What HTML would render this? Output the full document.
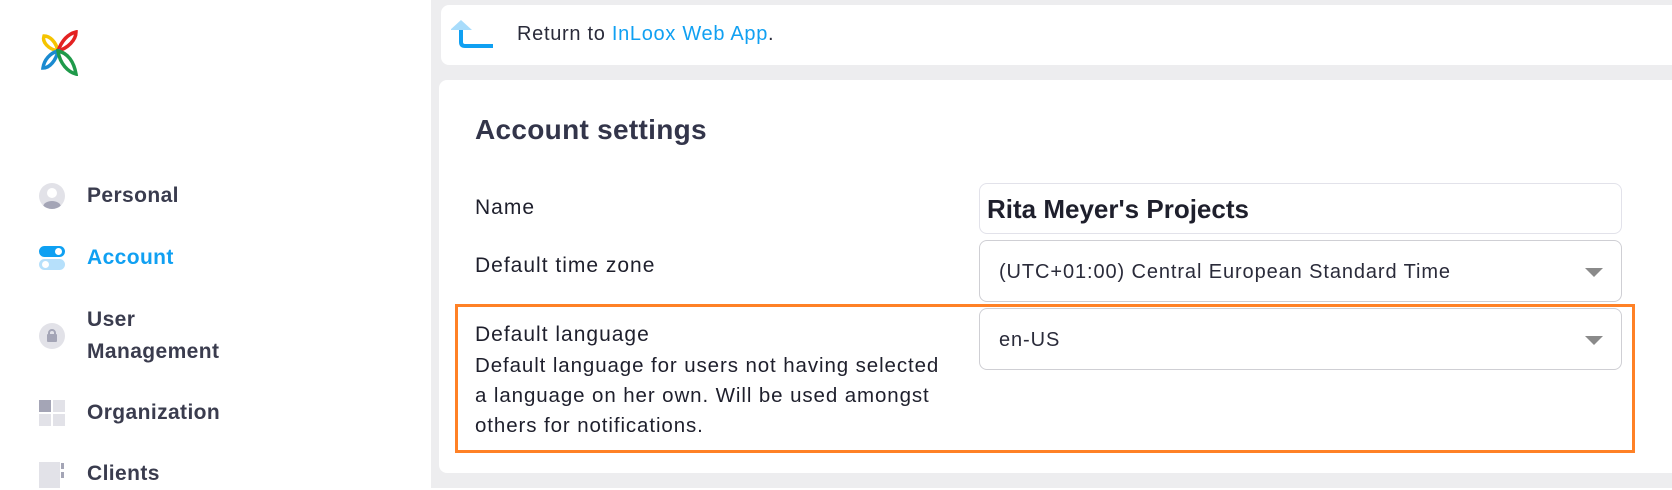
<!DOCTYPE html>
<html><head><meta charset="utf-8"><style>
*{margin:0;padding:0;box-sizing:border-box}
body{width:1672px;height:488px;overflow:hidden;background:#fff;font-family:"Liberation Sans",sans-serif;color:#2a2b3a;position:relative}
.side{position:absolute;left:0;top:0;width:431px;height:488px;background:#fff}
.main{position:absolute;left:431px;top:0;right:0;height:488px;background:#ededef}
.abs{position:absolute}
.nav{position:absolute;left:87px;font-size:21px;font-weight:bold;color:#3a3c4e;line-height:32px;letter-spacing:0.4px}
.card1{position:absolute;left:441px;top:5px;width:1300px;height:60px;background:#fff;border-radius:8px}
.card2{position:absolute;left:439px;top:80px;width:1300px;height:393px;background:#fff;border-radius:8px}
.lbl{position:absolute;left:475px;font-size:21px;color:#1e1f2c;line-height:30px;letter-spacing:1px}
.inp{position:absolute;left:979px;width:643px;border:1px solid #cfcfd4;border-radius:8px;background:#fff}
.arr{position:absolute;right:18px;width:0;height:0;border-left:9px solid transparent;border-right:9px solid transparent;border-top:9px solid #8a8a8a}
</style></head><body>
<div class="side">
<svg class="abs" style="left:40px;top:30px" width="38" height="46" viewBox="0 0 38 46">
<path d="M18 21 C8 19 2 12 4 6 C10 6 16 12 18 21Z" fill="none" stroke="#f5c400" stroke-width="3.5"/>
<path d="M18 21 C22 10 28 4 36 2 C36 10 28 18 18 21Z" fill="none" stroke="#e32222" stroke-width="3.5"/>
<path d="M18 21 C10 23 4 30 3 38 C10 38 16 30 18 21Z" fill="none" stroke="#1a8ad0" stroke-width="3.5"/>
<path d="M18 21 C28 23 34 32 36 44 C28 42 20 34 18 21Z" fill="none" stroke="#1f9a4a" stroke-width="3.5"/>
</svg>
<div class="abs" style="left:39px;top:183px;width:26px;height:26px;border-radius:50%;background:#e2e2e8;overflow:hidden"><div class="abs" style="left:8px;top:5px;width:10px;height:10px;border-radius:50%;background:#fff"></div><div class="abs" style="left:4px;top:18px;width:18px;height:12px;border-radius:50%;background:#a4a5b6"></div></div>
<div class="nav" style="top:180px">Personal</div>
<div class="abs" style="left:39px;top:246px;width:26px;height:11px;border-radius:6px;background:#0ea0f2"><div class="abs" style="right:3px;top:2px;width:7px;height:7px;border-radius:50%;background:#fff"></div></div>
<div class="abs" style="left:39px;top:259px;width:26px;height:11px;border-radius:6px;background:#b6e0fb"><div class="abs" style="left:3px;top:2px;width:7px;height:7px;border-radius:50%;background:#fff"></div></div>
<div class="nav" style="top:242px;color:#10a0f2">Account</div>
<div class="abs" style="left:39px;top:323px;width:26px;height:26px;border-radius:50%;background:#e2e2e8"><div class="abs" style="left:8px;top:11px;width:10px;height:8px;background:#a4a5b6;border-radius:1px"></div><div class="abs" style="left:9px;top:6px;width:8px;height:8px;border:2px solid #a4a5b6;border-radius:4px 4px 0 0"></div></div>
<div class="nav" style="top:304px">User<br>Management</div>
<div class="abs" style="left:39px;top:400px;width:12px;height:12px;background:#a4a5b6"></div>
<div class="abs" style="left:53px;top:400px;width:12px;height:12px;background:#e2e2e8"></div>
<div class="abs" style="left:39px;top:414px;width:12px;height:12px;background:#e2e2e8"></div>
<div class="abs" style="left:53px;top:414px;width:12px;height:12px;background:#e2e2e8"></div>
<div class="nav" style="top:397px">Organization</div>
<div class="abs" style="left:39px;top:462px;width:21px;height:26px;background:#e2e2e8"></div>
<div class="abs" style="left:61px;top:463px;width:3px;height:6px;background:#a4a5b6"></div>
<div class="abs" style="left:61px;top:472px;width:3px;height:6px;background:#a4a5b6"></div>
<div class="nav" style="top:458px">Clients</div>
</div>
<div class="main"></div>
<div class="card1">
<svg class="abs" style="left:10px;top:15px" width="44" height="34" viewBox="0 0 44 34"><path d="M10 0 L21 10 L-1 10Z" fill="#a8dcfb"/><path d="M10 10 V22 Q10 26 14 26 H42" fill="none" stroke="#10a0f2" stroke-width="4"/></svg>
<div class="abs" style="left:76px;top:18px;font-size:20px;color:#2a2b3a;letter-spacing:0.7px">Return to <span style="color:#10a0f2">InLoox Web App</span>.</div>
</div>
<div class="card2"></div>
<div class="abs" style="left:475px;top:114px;font-size:28px;font-weight:bold;color:#33354a;letter-spacing:0.3px">Account settings</div>
<div class="lbl" style="top:193px">Name</div>
<div class="lbl" style="top:251px">Default time zone</div>
<div class="inp" style="top:183px;height:51px;border-color:#e2e2ea"><div class="abs" style="left:7px;top:10px;font-size:26px;font-weight:bold;color:#1e1f2c">Rita Meyer's Projects</div></div>
<div class="inp" style="top:240px;height:62px"><div class="abs" style="left:19px;top:20px;font-size:20px;color:#2a2b3a;letter-spacing:0.9px">(UTC+01:00) Central European Standard Time</div><div class="arr" style="top:27px"></div></div>
<div class="abs" style="left:455px;top:304px;width:1180px;height:149px;border:3px solid #ff8126"></div>
<div class="lbl" style="top:320px">Default language</div>
<div class="abs" style="left:475px;top:351px;font-size:20.5px;line-height:30px;color:#1e1f2c;white-space:nowrap;letter-spacing:0.9px">Default language for users not having selected<br>a language on her own. Will be used amongst<br>others for notifications.</div>
<div class="inp" style="top:308px;height:62px"><div class="abs" style="left:19px;top:20px;font-size:20px;color:#2a2b3a;letter-spacing:0.9px">en-US</div><div class="arr" style="top:27px"></div></div>
</body></html>
